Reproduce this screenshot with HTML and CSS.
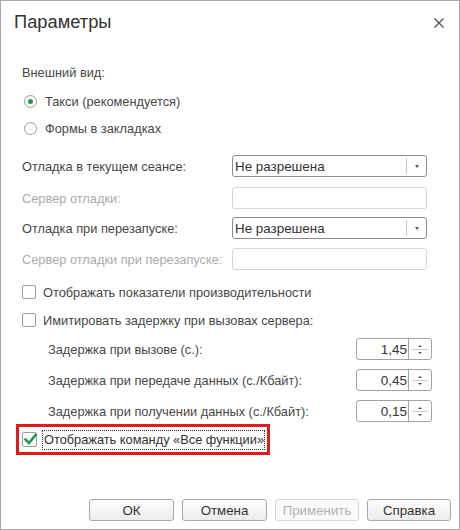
FILE: index.html
```html
<!DOCTYPE html>
<html lang="ru">
<head>
<meta charset="utf-8">
<title>Параметры</title>
<link rel="stylesheet" href="styles.css">
</head>
<body>
<div class="window">
  <div class="header">
    <div class="title">Параметры</div>
    <svg class="close" width="12" height="12" viewBox="0 0 12 12"><path d="M1.5 1.5L10.5 10.5M10.5 1.5L1.5 10.5" stroke="#4a4a4a" stroke-width="1.2" fill="none"/></svg>
  </div>
  <div class="content">
    <div class="row r1">Внешний вид:</div>
    <div class="row radio-row r2"><span class="radio checked"></span><span>Такси (рекомендуется)</span></div>
    <div class="row radio-row r3"><span class="radio"></span><span>Формы в закладках</span></div>

    <div class="row field r4"><span>Отладка в текущем сеансе:</span><div class="select"><span class="sv">Не разрешена</span><span class="sbtn"><i class="tri-down"></i></span></div></div>
    <div class="row field r5 disabled"><span>Сервер отладки:</span><div class="input"></div></div>
    <div class="row field r6"><span>Отладка при перезапуске:</span><div class="select"><span class="sv">Не разрешена</span><span class="sbtn"><i class="tri-down"></i></span></div></div>
    <div class="row field r7 disabled"><span>Сервер отладки при перезапуске:</span><div class="input"></div></div>

    <div class="row cb-row r8"><span class="cb"></span><span>Отображать показатели производительности</span></div>
    <div class="row cb-row r9"><span class="cb"></span><span>Имитировать задержку при вызовах сервера:</span></div>

    <div class="row spin-row r10"><span>Задержка при вызове (с.):</span><div class="spin"><span class="spv">1,45</span><span class="spb"><i class="tri-up"></i><i class="tri-down sm"></i></span></div></div>
    <div class="row spin-row r11"><span>Задержка при передаче данных (с./Кбайт):</span><div class="spin"><span class="spv">0,45</span><span class="spb"><i class="tri-up"></i><i class="tri-down sm"></i></span></div></div>
    <div class="row spin-row r11"><span>Задержка при получении данных (с./Кбайт):</span><div class="spin"><span class="spv">0,15</span><span class="spb"><i class="tri-up"></i><i class="tri-down sm"></i></span></div></div>

    <div class="highlight">
      <span class="cb on"><svg width="15" height="15" viewBox="0 0 15 15"><path d="M2.5 7.5L6 11L12.5 3" stroke="#1f9a4b" stroke-width="2.6" fill="none" stroke-linecap="square"/></svg></span>
      <span class="focus">Отображать команду «Все функции»</span>
    </div>
  </div>
  <div class="footer">
    <button class="btn b-ok">ОК</button>
    <button class="btn b-cancel">Отмена</button>
    <button class="btn b-apply" disabled>Применить</button>
    <button class="btn b-help">Справка</button>
  </div>
</div>
</body>
</html>
```

FILE: styles.css
```css
html, body {
  margin: 0;
  padding: 0;
  background: #fff;
}
body {
  font-family: "Liberation Sans", Arial, sans-serif;
  font-size: 12.8px;
  color: #474747;
}
.window {
  width: 460px;
  height: 530px;
  box-sizing: border-box;
  border: 1px solid #a9a9a9;
  background: #fff;
  display: flex;
  flex-direction: column;
}
.header {
  height: 41px;
  display: flex;
  align-items: center;
  justify-content: space-between;
  padding: 0 14px 0 13px;
}
.title {
  font-size: 18.3px;
  color: #333;
}
.close {
  display: block;
  margin-top: 2px;
}
.content {
  padding: 0 27px 0 21px;
  display: flex;
  flex-direction: column;
}
.row {
  height: 22px;
  display: flex;
  align-items: center;
  white-space: nowrap;
}
.r1 { margin-top: 19px; }
.r2 { margin-top: 7px; }
.r3 { margin-top: 5px; }
.r4 { margin-top: 16px; }
.r5 { margin-top: 10px; }
.r6 { margin-top: 8px; }
.r7 { margin-top: 9px; }
.r8 { margin-top: 11px; }
.r9 { margin-top: 6px; }
.r10 { margin-top: 7px; }
.r11 { margin-top: 9px; }

.radio-row { gap: 8px; }
.radio {
  width: 11px;
  height: 11px;
  margin-left: 2px;
  border: 1px solid #9a9a9a;
  border-radius: 50%;
  display: flex;
  align-items: center;
  justify-content: center;
  background: #fff;
}
.radio.checked::after {
  content: "";
  width: 5px;
  height: 5px;
  border-radius: 50%;
  background: #1f9a4b;
}

.field {
  display: grid;
  grid-template-columns: 210px 195px;
  align-items: center;
}
.field.disabled > span { color: #ababab; }
.select {
  height: 22px;
  box-sizing: border-box;
  border: 1px solid #8c8c8c;
  border-radius: 3px;
  display: flex;
  align-items: stretch;
}
.sv {
  flex: 1;
  display: flex;
  align-items: center;
  padding-left: 2px;
  font-size: 13.4px;
  color: #333;
}
.sbtn {
  width: 19px;
  border-left: 1px solid #c8c8c8;
  margin: 2px 0;
  display: flex;
  align-items: center;
  justify-content: center;
}
.tri-down {
  width: 0;
  height: 0;
  border-left: 2.5px solid transparent;
  border-right: 2.5px solid transparent;
  border-top: 3px solid #555;
}
.tri-up {
  width: 0;
  height: 0;
  border-left: 2px solid transparent;
  border-right: 2px solid transparent;
  border-bottom: 2px solid #555;
}
.tri-down.sm {
  border-left-width: 2px;
  border-right-width: 2px;
  border-top-width: 2px;
}
.input {
  height: 22px;
  box-sizing: border-box;
  border: 1px solid #d6d6d6;
  border-radius: 3px;
}

.cb-row { gap: 7px; }
.cb {
  width: 14px;
  height: 14px;
  box-sizing: border-box;
  border: 1px solid #9a9a9a;
  border-radius: 2px;
  background: #fff;
  flex: none;
}

.spin-row {
  padding-left: 26px;
  justify-content: space-between;
}
.spin {
  width: 76px;
  height: 22px;
  box-sizing: border-box;
  border: 1px solid #a3a3a3;
  border-radius: 3px;
  display: flex;
  align-items: stretch;
}
.spv {
  flex: 1;
  display: flex;
  align-items: center;
  justify-content: flex-end;
  padding-right: 1px;
  font-size: 13.5px;
  color: #333;
}
.spb {
  width: 22px;
  border-left: 1px solid #a3a3a3;
  display: flex;
  flex-direction: column;
  align-items: center;
  justify-content: space-around;
  background: linear-gradient(#fff 0 49%, #c8c8c8 49% 54%, #fff 54%);
  background-size: 16px 100%;
  background-position: center;
  background-repeat: no-repeat;
  padding: 3px 0;
}

.highlight {
  margin-top: 2px;
  margin-left: -6px;
  width: 254px;
  height: 31px;
  box-sizing: border-box;
  border: 3px solid #e01b1b;
  display: flex;
  align-items: center;
  padding-left: 3px;
  gap: 5px;
  white-space: nowrap;
}
.cb.on {
  width: 15px;
  height: 15px;
  position: relative;
}
.cb.on svg {
  position: absolute;
  left: 0;
  top: -1px;
}
.focus {
  border: 1px dotted #333;
  padding: 2px 0 2px 1px;
  line-height: 14px;
  font-size: 12.8px;
  color: #333;
}

.footer {
  margin-top: auto;
  display: flex;
  justify-content: flex-end;
  gap: 8px;
  padding: 0 8px 8px 0;
}
.btn {
  height: 22px;
  box-sizing: border-box;
  border: 1px solid #a9a9a9;
  border-radius: 3px;
  background: linear-gradient(#fdfdfd, #ececec);
  font-family: "Liberation Sans", Arial, sans-serif;
  font-size: 13.3px;
  color: #333;
  padding: 0;
}
.b-ok { width: 85px; }
.b-cancel { width: 85px; }
.b-apply { width: 84px; border-color: #d6d6d6; color: #b0b0b0; background: #fafafa; }
.b-help { width: 84px; }
```
